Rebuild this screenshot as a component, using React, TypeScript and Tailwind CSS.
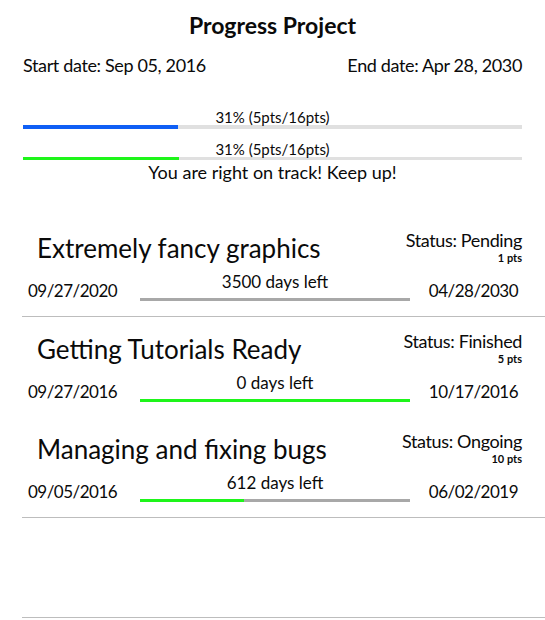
import React from "react";

type Task = {
  title: string;
  status: string;
  pts: number;
  start: string;
  end: string;
  daysLeft: number;
  done: number; // 0..100, share of the bar in green
  h: string;
  border: string;
};

const TASKS: Task[] = [
  { title: "Extremely fancy graphics", status: "Pending", pts: 1, start: "09/27/2020", end: "04/28/2030", daysLeft: 3500, done: 0, h: "h-[101px]", border: "border-[#bdbdbd]" },
  { title: "Getting Tutorials Ready", status: "Finished", pts: 5, start: "09/27/2016", end: "10/17/2016", daysLeft: 0, done: 100, h: "h-[100px]", border: "border-white" },
  { title: "Managing and fixing bugs", status: "Ongoing", pts: 10, start: "09/05/2016", end: "06/02/2019", daysLeft: 612, done: 38.7, h: "h-[101px]", border: "border-[#bdbdbd]" },
];

function ProgressBar({ value, fill, height }: { value: number; fill: string; height: string }) {
  return (
    <div className={"w-full bg-[#e0e0e0] " + height}>
      <div className={"h-full " + fill} style={{ width: `${value}%` }} />
    </div>
  );
}

function TaskRow({ task }: { task: Task }) {
  return (
    <div className={"ml-[22px] border-b pr-[23px] " + task.h + " " + task.border}>
      <div className="flex items-start justify-between">
        <div className="pl-[15px] pt-[17px] text-[26px] leading-[30px]">{task.title}</div>
        <div className="pt-[14px] text-right">
          <div className="text-[18px] leading-[20px] tracking-[-0.02em]">Status: {task.status}</div>
          <div className="mt-[2px] text-[11px] font-bold leading-[12px]">{task.pts} pts</div>
        </div>
      </div>
      <div className="grid grid-cols-[118px_270px_1fr]">
        <div className="pl-[6px] pt-[16px] text-[17px] leading-[22px] tracking-[-0.03em]">{task.start}</div>
        <div className="flex flex-col pt-[8px]">
          <div className="text-center text-[17px] leading-[20px]">{task.daysLeft} days left</div>
          <div className="mt-[6px] h-[3px] w-full bg-[#a8a8a8]">
            <div className="h-full bg-[#1ef51a]" style={{ width: `${task.done}%` }} />
          </div>
        </div>
        <div className="pr-[4px] pt-[16px] text-right text-[17px] leading-[22px] tracking-[-0.03em]">{task.end}</div>
      </div>
    </div>
  );
}

export default function App() {
  return (
    <div className="h-[620px] w-[545px] overflow-hidden bg-white text-[#0a0a0a]" style={{ fontFamily: "Lato, 'Noto Sans', sans-serif" }}>
      <h1 className="text-center text-[23px] font-bold leading-[50px]">Progress Project</h1>

      <div className="flex justify-between px-[23px] text-[18px] leading-[30px] tracking-[-0.02em]">
        <span>Start date: Sep 05, 2016</span>
        <span>End date: Apr 28, 2030</span>
      </div>

      <div className="px-[23px]">
        <div className="mt-[29px] text-center text-[15px] leading-[16px]">31% (5pts/16pts)</div>
        <ProgressBar value={31} fill="bg-[#0f5ff5]" height="h-[4px]" />
        <div className="mt-[12px] text-center text-[15px] leading-[16px]">31% (5pts/16pts)</div>
        <ProgressBar value={31.3} fill="bg-[#1ef51a]" height="h-[3px]" />
        <div className="mt-[1px] text-center text-[18px] leading-[22px]">You are right on track! Keep up!</div>
      </div>

      <div className="mt-[33px]">
        {TASKS.map((t) => (
          <TaskRow key={t.title} task={t} />
        ))}
        <div className="ml-[22px] h-[100px] border-b border-[#bdbdbd]" />
      </div>
    </div>
  );
}
